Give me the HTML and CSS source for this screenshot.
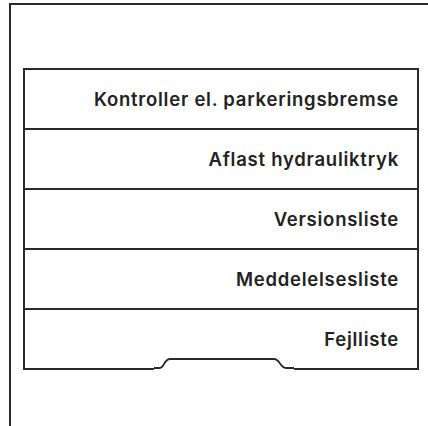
FILE: index.html
```html
<!DOCTYPE html>
<html lang="da">

<head>
	<meta charset="UTF-8">
	<meta name="viewport" content="width=device-width, initial-scale=1.0">
	<title>Service menu</title>
	<link rel="stylesheet" href="styles.css">
</head>

<body>
	<div class="frame">
		<div class="menu">
			<div class="item">Kontroller el. parkeringsbremse</div>
			<div class="item">Aflast hydrauliktryk</div>
			<div class="item">Versionsliste</div>
			<div class="item">Meddelelsesliste</div>
			<div class="item">Fejlliste</div>
			<svg class="notch" width="140" height="14" viewBox="0 0 140 14">
				<rect x="0" y="10" width="140" height="4" fill="#fff"/>
				<path d="M0 11 H6 C10 11 10 2 16 2 H120 C126 2 126 11 132 11 H140" fill="#fff" stroke="#2a2a2a" stroke-width="1.8"/>
			</svg>
		</div>
	</div>
</body>

</html>
```

FILE: styles.css
```css
body {
	margin: 0;
	padding: 0;
	background-color: #fff;
	font-family: Inter, Roboto, "Liberation Sans", sans-serif;
	color: #222;
	overflow: hidden;
}

.frame {
	box-sizing: border-box;
	margin: 3px 0 0 9px;
	height: 423px;
	border-left: 2px solid #2a2a2a;
	border-top: 2px solid #2a2a2a;
	padding: 63px 9px 0 12px;
}

.menu {
	position: relative;
	border: 2px solid #2a2a2a;
}

.item {
	height: 58px;
	display: flex;
	align-items: center;
	justify-content: flex-end;
	padding-right: 18px;
	font-size: 18.5px;
	font-weight: 600;
	letter-spacing: 0.75px;
}

.item + .item {
	border-top: 2px solid #2a2a2a;
}

.notch {
	position: absolute;
	left: 129px;
	bottom: -3px;
}
```
